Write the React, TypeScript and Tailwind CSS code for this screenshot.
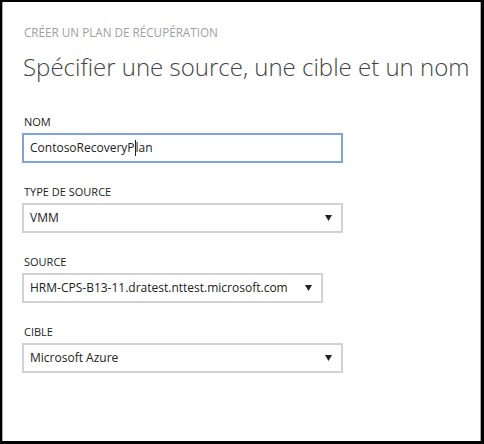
import React from "react";

const Arrow = () => (
  <svg width="7" height="6" viewBox="0 0 7 6" className="shrink-0">
    <path d="M0 0 H7 L3.5 6 Z" fill="#222" />
  </svg>
);

function Field({ label, children }: { label: string; children: React.ReactNode }) {
  return (
    <div className="flex flex-col">
      <div className="h-[16px] mb-[3px] pl-[2px] text-[11px] leading-[16px] text-[#222]">{label}</div>
      {children}
    </div>
  );
}

function Select({ value, width }: { value: string; width: string }) {
  return (
    <div className={`${width} h-[30px] border-2 border-[#d2d2d2] flex items-center justify-between pl-[6px] pr-[9px] text-[12px] text-[#222] whitespace-nowrap`}>
      <span>{value}</span>
      <Arrow />
    </div>
  );
}

export default function App() {
  return (
    <div
      className="w-[484px] h-[444px] bg-black pl-[2px] pt-[2px] pr-[3px] pb-[3px]"
      style={{ fontFamily: '"Open Sans", "Noto Sans", sans-serif' }}
    >
      <div className="w-full h-full bg-white border-l border-r border-[#aaa] pl-[19px]">
        <div className="pt-[22px] h-[38px] text-[11.7px] leading-[16px] text-[#a0a0a0] pl-[2px] whitespace-nowrap">
          CRÉER UN PLAN DE RÉCUPÉRATION
        </div>
        <div className="mt-[10px] h-[34px] text-[24px] leading-[34px] font-light text-[#444] pl-[1px] whitespace-nowrap">
          Spécifier une source, une cible et un nom
        </div>
        <div className="mt-[30px] flex flex-col gap-[21px]">
          <Field label="NOM">
            <div className="w-[321px] h-[30px] border-2 border-[#7fa4dc] flex items-center pl-[6px] text-[12px] text-[#222]">
              <span>ContosoRecoveryP</span>
              <span className="inline-block w-px h-[16px] bg-[#222]" />
              <span>lan</span>
            </div>
          </Field>
          <Field label="TYPE DE SOURCE">
            <Select value="VMM" width="w-[321px]" />
          </Field>
          <Field label="SOURCE">
            <Select value="HRM-CPS-B13-11.dratest.nttest.microsoft.com" width="w-[301px]" />
          </Field>
          <Field label="CIBLE">
            <Select value="Microsoft Azure" width="w-[321px]" />
          </Field>
        </div>
      </div>
    </div>
  );
}
